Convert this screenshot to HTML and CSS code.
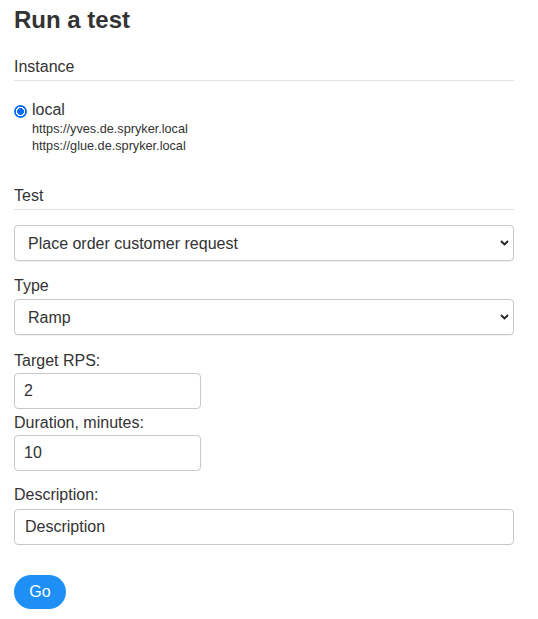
FILE: index.html
```html
<!DOCTYPE html>
<html>
<head>
<meta charset="utf-8">
<link rel="stylesheet" href="styles.css">
</head>
<body>
<main class="page">
  <h1 class="title">Run a test</h1>

  <h2 class="section section-instance">Instance</h2>
  <label class="radio-row">
    <input class="radio" type="radio" name="instance" checked>
    <span class="radio-label">local</span>
  </label>
  <div class="urls">
    <div>https://yves.de.spryker.local</div>
    <div>https://glue.de.spryker.local</div>
  </div>

  <h2 class="section section-test">Test</h2>
  <div class="select-wrap first">
    <select class="select"><option>Place order customer request</option></select>
    <svg class="chevron" width="9" height="6" viewBox="0 0 9 6"><path d="M1 1 L4.5 4.5 L8 1" fill="none" stroke="#222" stroke-width="1.8"/></svg>
  </div>

  <label class="label label-type">Type</label>
  <div class="select-wrap">
    <select class="select"><option>Ramp</option></select>
    <svg class="chevron" width="9" height="6" viewBox="0 0 9 6"><path d="M1 1 L4.5 4.5 L8 1" fill="none" stroke="#222" stroke-width="1.8"/></svg>
  </div>

  <label class="label label-rps">Target RPS:</label>
  <input class="input short" type="text" value="2">

  <label class="label label-duration">Duration, minutes:</label>
  <input class="input short" type="text" value="10">

  <label class="label label-desc">Description:</label>
  <input class="input wide" type="text" placeholder="Description">

  <button class="go" type="button">Go</button>
</main>
</body>
</html>
```
FILE: styles.css
```css
* { box-sizing: border-box; }
html, body { margin: 0; padding: 0; background: #fff; }
body {
  font-family: "Liberation Sans", Arial, sans-serif;
  color: #333;
}
.page {
  width: 500px;
  margin-left: 14px;
  padding-top: 5px;
  display: flex;
  flex-direction: column;
  align-items: flex-start;
}
.title {
  margin: 0;
  font-size: 24px;
  line-height: 29px;
  font-weight: bold;
  color: #333;
}
.section {
  align-self: stretch;
  margin: 0;
  font-size: 16px;
  font-weight: normal;
  line-height: 20px;
  padding-bottom: 3px;
  border-bottom: 1px solid #e3e3e3;
  color: #333;
}
.section-instance { margin-top: 23px; }
.section-test { margin-top: 31px; }
.radio-row {
  display: flex;
  align-items: center;
  gap: 5px;
  margin-top: 19px;
  font-size: 16px;
  line-height: 20px;
}
.radio {
  appearance: none;
  -webkit-appearance: none;
  margin: 0;
  width: 13px;
  height: 13px;
  border-radius: 50%;
  background: radial-gradient(circle, #0a6cf5 0 3.3px, #fff 3.7px 4.6px, #0a6cf5 5px);
  position: relative;
  top: 1px;
}
.urls {
  margin-top: 1px;
  margin-left: 18px;
  font-size: 12.7px;
  line-height: 17px;
  color: #333;
}
.select-wrap {
  position: relative;
  align-self: stretch;
  margin-top: 3px;
}
.select-wrap.first { margin-top: 15px; }
.select {
  appearance: none;
  -webkit-appearance: none;
  display: block;
  width: 100%;
  height: 36px;
  padding: 0 30px 0 13px;
  font-family: "Liberation Sans", Arial, sans-serif;
  font-size: 16px;
  color: #333;
  background: #fff;
  border: 1px solid #c8c8c8;
  border-radius: 4px;
  box-shadow: 0 1px 1px rgba(0,0,0,0.06);
}
.chevron {
  position: absolute;
  right: 5px;
  top: 15px;
  pointer-events: none;
}
.label {
  font-size: 16px;
  line-height: 20px;
  color: #333;
}
.label-type { margin-top: 15px; }
.label-rps { margin-top: 16px; }
.label-duration { margin-top: 4px; }
.label-desc { margin-top: 14px; }
.input {
  display: block;
  height: 36px;
  margin-top: 2px;
  padding: 0 9px;
  font-family: "Liberation Sans", Arial, sans-serif;
  font-size: 16px;
  color: #333;
  background: #fff;
  border: 1px solid #c8c8c8;
  border-radius: 4px;
  outline: none;
}
.input.short { width: 187px; }
.input.wide { width: 500px; margin-top: 4px; padding-left: 10px; }
.input.wide::placeholder { color: #333; opacity: 1; }
.go {
  margin-top: 30px;
  width: 52px;
  height: 34px;
  border: none;
  border-radius: 17px;
  background: #1e8ff5;
  color: #fff;
  font-family: "Liberation Sans", Arial, sans-serif;
  font-size: 16px;
  font-weight: 500;
  padding: 0;
}
```
